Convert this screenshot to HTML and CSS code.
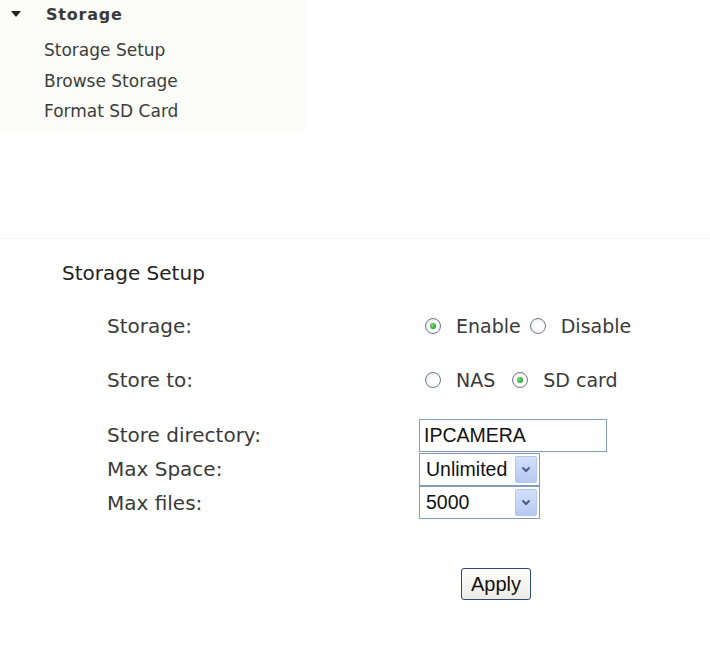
FILE: index.html
```html
<!DOCTYPE html>
<html>
<head>
<meta charset="utf-8">
<link rel="stylesheet" href="styles.css">
</head>
<body>
<div class="sidebar">
  <div class="menu-head">
    <svg class="tri" width="10" height="7" viewBox="0 0 10 7"><polygon points="0,0 10,0 5,6" fill="#222"/></svg>
    <span class="menu-title">Storage</span>
  </div>
  <ul class="menu">
    <li>Storage Setup</li>
    <li>Browse Storage</li>
    <li>Format SD Card</li>
  </ul>
</div>
<div class="divider"></div>
<div class="content">
  <h1 class="heading">Storage Setup</h1>
  <div class="form">
    <div class="label row-a">Storage:</div>
    <div class="ctrl row-a radios">
      <label class="opt"><span class="radio on"></span>Enable</label>
      <label class="opt"><span class="radio"></span>Disable</label>
    </div>
    <div class="label row-b">Store to:</div>
    <div class="ctrl row-b radios">
      <label class="opt wide"><span class="radio"></span>NAS</label>
      <label class="opt"><span class="radio on"></span>SD card</label>
    </div>
    <div class="label row-c">Store directory:</div>
    <div class="ctrl row-c"><div class="textbox">IPCAMERA</div></div>
    <div class="label row-d">Max Space:</div>
    <div class="ctrl row-d"><div class="select"><span class="sel-text">Unlimited</span><span class="arrow"><svg width="10" height="7" viewBox="0 0 10 7"><polyline points="1.5,1.5 5,5 8.5,1.5" fill="none" stroke="#4a5d86" stroke-width="2"/></svg></span></div></div>
    <div class="label row-e">Max files:</div>
    <div class="ctrl row-e"><div class="select"><span class="sel-text">5000</span><span class="arrow"><svg width="10" height="7" viewBox="0 0 10 7"><polyline points="1.5,1.5 5,5 8.5,1.5" fill="none" stroke="#4a5d86" stroke-width="2"/></svg></span></div></div>
  </div>
  <div class="actions"><button class="apply">Apply</button></div>
</div>
</body>
</html>
```
FILE: styles.css
```css
html, body {
  margin: 0;
  padding: 0;
  background: #ffffff;
}
body {
  font-family: "DejaVu Sans", Verdana, sans-serif;
  color: #333;
}
.sidebar {
  width: 305px;
  height: 132px;
  background: #fbfcf7;
  box-sizing: border-box;
  padding-top: 3px;
}
.menu-head {
  display: flex;
  align-items: center;
  height: 22px;
}
.tri {
  margin-left: 11px;
  margin-right: 25px;
}
.menu-title {
  font-weight: bold;
  font-size: 16px;
  letter-spacing: 0.8px;
  color: #3a3a3a;
}
.menu {
  list-style: none;
  margin: 10px 0 0 0;
  padding: 0 0 0 44px;
  font-size: 17px;
  line-height: 30.5px;
  color: #3c3c3c;
}
.divider {
  margin-top: 106px;
  height: 1px;
  background: #f3f3f3;
  box-shadow: 0 1px 3px rgba(0,0,0,0.02);
}
.content {
  padding-left: 62px;
}
.heading {
  margin: 22px 0 0 0;
  font-size: 20px;
  font-weight: normal;
  line-height: 24px;
  color: #222;
}
.form {
  display: grid;
  grid-template-columns: 312px auto;
  margin-left: 45px;
  margin-top: 26px;
  font-size: 20px;
  color: #3a3a3a;
}
.label, .ctrl {
  display: flex;
  align-items: center;
}
.row-a { height: 30px; }
.row-b { height: 30px; margin-top: 24px; }
.row-c { height: 34px; margin-top: 23px; }
.row-d { height: 34px; }
.row-e { height: 33px; }
.radios {
  padding-left: 6px;
  font-size: 19px;
}
.opt {
  display: flex;
  align-items: center;
  margin-right: 9px;
}
.opt.wide {
  margin-right: 17px;
}
.radio {
  width: 14px;
  height: 14px;
  border: 1px solid #6d7885;
  border-radius: 50%;
  background: radial-gradient(circle at 60% 60%, #ffffff 30%, #e4e4e4 100%);
  margin-right: 15px;
  display: flex;
  align-items: center;
  justify-content: center;
}
.radio.on::after {
  content: "";
  width: 6px;
  height: 6px;
  border-radius: 50%;
  background: radial-gradient(circle at 40% 40%, #7fe07f 0%, #22a322 70%);
}
.textbox {
  height: 33px;
  width: 188px;
  border: 1px solid #7f9db9;
  font-family: "Liberation Sans", Arial, sans-serif;
  font-size: 19.5px;
  color: #111;
  display: flex;
  align-items: center;
  padding-left: 4px;
  box-sizing: border-box;
}
.select {
  width: 121px;
  height: 33px;
  box-sizing: border-box;
  border: 1px solid #7f9db9;
  display: flex;
  align-items: center;
  justify-content: space-between;
  padding: 2px 2px 2px 6px;
  font-family: "Liberation Sans", Arial, sans-serif;
  font-size: 19.5px;
  color: #111;
}
.arrow {
  width: 22px;
  height: 27px;
  box-sizing: border-box;
  border: 1px solid #b5c6ec;
  border-radius: 2px;
  background: linear-gradient(#d3e0fb, #b6c9f3);
  display: flex;
  align-items: center;
  justify-content: center;
}
.actions {
  margin-top: 49px;
  padding-left: 399px;
}
.apply {
  width: 70px;
  height: 32px;
  border: 1px solid #2f4a6e;
  border-radius: 3px;
  background: linear-gradient(#ffffff, #eceae3);
  font-family: "Liberation Sans", Arial, sans-serif;
  font-size: 20px;
  color: #111;
  padding: 0;
}
```
